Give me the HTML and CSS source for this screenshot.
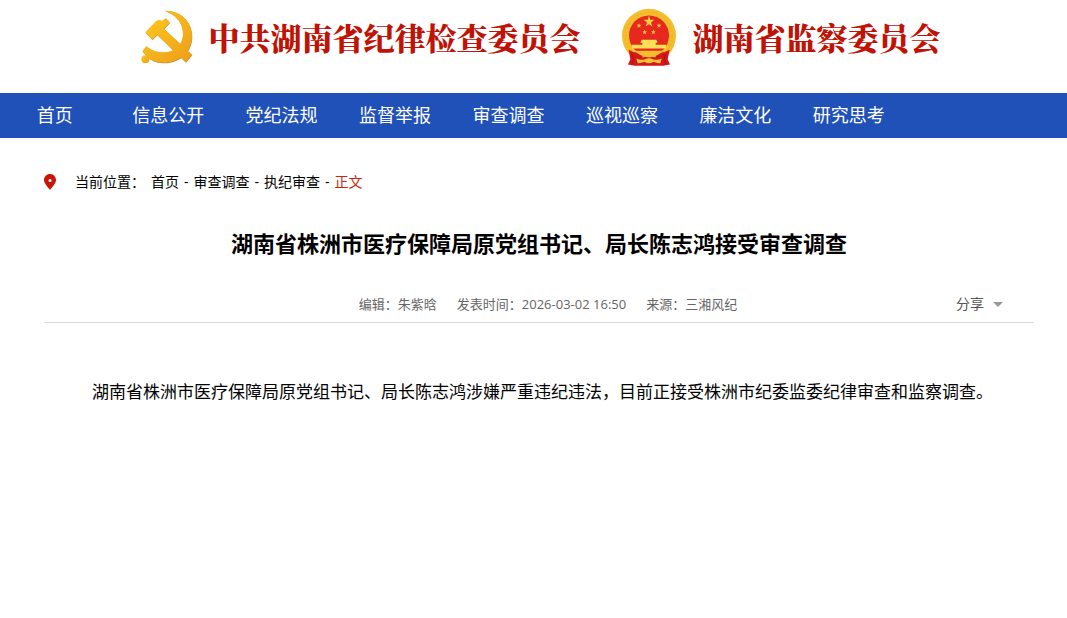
FILE: index.html
```
<!DOCTYPE html>
<html lang="zh-CN">
<head>
    <meta charset="UTF-8">
    <meta name="viewport" content="width=device-width, initial-scale=1.0">
    <title>湖南省株洲市医疗保障局原党组书记、局长陈志鸿接受审查调查</title>
    <link rel="stylesheet" href="styles.css">
</head>
<body>
    <!-- 页头 -->
    <header class="header">
        <div class="brand">
            <svg class="party-emblem" viewBox="32 28 156 162" aria-hidden="true">
                <defs>
                    <linearGradient id="gold" x1="0" y1="0" x2="1" y2="1">
                        <stop offset="0" stop-color="#fbc81f"/>
                        <stop offset="1" stop-color="#ee9d18"/>
                    </linearGradient>
                </defs>
                <g fill="#c98a35" transform="translate(1 2)">
                    <path d="M103 30C150 28 185 62 185 107C185 153 147 186 102 186C82 186 66 180 56 172L36 152L48 136L61 146C88 160 122 158 143 138C169 112 164 50 103 30Z"/>
                    <path d="M45 95L78 60Q86 56 95 60L107 52L118 66L101 84L185 162L166 184L80 102L66 117Z"/>
                </g>
                <g fill="url(#gold)">
                    <path d="M103 30C150 28 185 62 185 107C185 153 147 186 102 186C82 186 66 180 56 172L36 152L48 136L61 146C88 160 122 158 143 138C169 112 164 50 103 30Z"/>
                    <circle cx="45" cy="176" r="12"/>
                    <path d="M45 95L78 60Q86 56 95 60L107 52L118 66L101 84L185 162L166 184L80 102L66 117Z"/>
                </g>
            </svg>
            <span class="brand-name">中共湖南省纪律检查委员会</span>
        </div>
        <div class="brand">
            <svg class="state-emblem" viewBox="32 24 168 176" aria-hidden="true">
                <circle cx="116" cy="107" r="81" fill="#f4bd2c"/>
                <circle cx="116" cy="107" r="70" fill="none" stroke="#e8a925" stroke-width="2" stroke-dasharray="7 5"/>
                <circle cx="116" cy="106" r="60" fill="#e7281f"/>
                <path d="M116 47L120 59H132L122 67L126 79L116 72L106 79L110 67L100 59H112Z" fill="#fad23d"/>
                <g fill="#f9c938">
                    <path id="star" d="M86 69L88 74H93L89 78L91 83L86 80L81 83L83 78L79 74H84Z"/>
                    <use href="#star" x="60"/>
                    <use href="#star" x="17" y="19"/>
                    <use href="#star" x="43" y="19"/>
                </g>
                <path d="M94 119H138L142 128H136V134H167V145H65V134H96V128H90Z" fill="#ffdf55"/>
                <path d="M55 149Q74 162 98 154L96 172Q116 166 136 172L134 154Q158 162 178 149L172 177L179 193L159 197H73L53 193L60 177Z" fill="#d5171b"/>
                <path d="M72 152H160Q142 170 116 172Q90 170 72 152Z" fill="#f5bd2f"/>
                <path d="M78 175Q92 182 104 177Q116 172 128 177Q140 182 154 175L150 189Q139 190 130 185Q116 194 102 185Q92 190 82 189Z" fill="#f6c333"/>
                <path d="M65 162L70 178L65 192M166 162L161 178L167 192" fill="none" stroke="#a91018" stroke-width="3"/>
            </svg>
            <span class="brand-name">湖南省监察委员会</span>
        </div>
    </header>

    <!-- 导航 -->
    <nav class="nav">
        <ul class="nav-list">
            <li><a href="#">首页</a></li>
            <li><a href="#">信息公开</a></li>
            <li><a href="#">党纪法规</a></li>
            <li><a href="#">监督举报</a></li>
            <li><a href="#">审查调查</a></li>
            <li><a href="#">巡视巡察</a></li>
            <li><a href="#">廉洁文化</a></li>
            <li><a href="#">研究思考</a></li>
        </ul>
    </nav>

    <main class="container">
        <!-- 当前位置 -->
        <div class="location">
            <svg class="pin" viewBox="0 0 12 16" aria-hidden="true">
                <path d="M6 0C2.600 0 0 2.700 0 6C0 9.500 3.500 12.500 6 16C8.500 12.500 12 9.500 12 6C12 2.700 9.400 0 6 0Z" fill="#cb1408"/>
                <circle cx="6" cy="6.500" r="1.500" fill="#fff"/>
            </svg>
            <span>当前位置：</span>
            <div class="crumbs">
                <a href="#">首页</a>
                <span>-</span>
                <a href="#">审查调查</a>
                <span>-</span>
                <a href="#">执纪审查</a>
                <span>-</span>
                <a href="#" class="current">正文</a>
            </div>
        </div>

        <!-- 正文 -->
        <article>
            <h1>湖南省株洲市医疗保障局原党组书记、局长陈志鸿接受审查调查</h1>
            <div class="meta">
                <span>编辑：朱紫晗</span>
                <span>发表时间：2026-03-02 16:50</span>
                <span>来源：三湘风纪</span>
                <button type="button" class="share">分享</button>
            </div>
            <div class="content">
                <p>湖南省株洲市医疗保障局原党组书记、局长陈志鸿涉嫌严重违纪违法，目前正接受株洲市纪委监委纪律审查和监察调查。</p>
            </div>
        </article>
    </main>
</body>
</html>
```

FILE: styles.css
```
* {
    box-sizing: border-box;
}

body {
    margin: 0;
    background-color: #ffffff;
    color: #000000;
    font-family: "Open Sans", "Noto Sans CJK SC", sans-serif;
    font-size: 14px;
}

a {
    color: inherit;
    text-decoration: none;
}

.header {
    display: flex;
    justify-content: center;
    gap: 40px;
    padding: 7px 0 26px 14px;
}

.brand {
    display: flex;
    align-items: center;
    gap: 16px;
    height: 60px;
}

.party-emblem {
    width: 52px;
    height: 54px;
}

.state-emblem {
    width: 56px;
    height: 59px;
}

.brand-name {
    color: #c01205;
    font-family: "Noto Serif CJK SC", "Noto Sans CJK SC", serif;
    font-size: 31px;
    font-weight: 900;
    line-height: 60px;
    white-space: nowrap;
}

.nav {
    background-color: #1f51b8;
}

.nav-list {
    display: grid;
    grid-template-columns: repeat(9, 1fr);
    margin: 0 48px 0 -2px;
    padding: 0;
    list-style: none;
}

.nav-list a {
    display: block;
    color: #ffffff;
    font-size: 18px;
    line-height: 45px;
    text-align: center;
}

.container {
    margin: 0 33px 0 44px;
}

.location {
    display: flex;
    align-items: center;
    padding-top: 34px;
    line-height: 20px;
}

.pin {
    width: 12px;
    height: 16px;
    margin-right: 19px;
}

.crumbs {
    display: flex;
    gap: 5px;
    margin-left: 6px;
}

.current {
    color: #c9250f;
}

h1 {
    margin: 35px 0 0;
    font-size: 22px;
    line-height: 32px;
    text-align: center;
}

.meta {
    position: relative;
    display: flex;
    justify-content: center;
    gap: 20px;
    padding: 34px 0 7px 18px;
    border-bottom: 1px solid #dddddd;
    color: #666666;
    font-size: 13px;
    line-height: 22px;
}

.share {
    position: absolute;
    right: 31px;
    bottom: 7px;
    display: flex;
    align-items: center;
    gap: 9px;
    padding: 0;
    border: none;
    background: none;
    color: #555555;
    font-family: inherit;
    font-size: 14px;
    line-height: 22px;
    cursor: pointer;
}

.share::after {
    content: "";
    border: 5px solid transparent;
    border-top-color: #999999;
    border-bottom: none;
}

.content {
    padding: 52px 14px 40px;
    font-size: 17px;
    line-height: 34px;
}

.content p {
    margin: 0;
    text-indent: 2em;
}
```
